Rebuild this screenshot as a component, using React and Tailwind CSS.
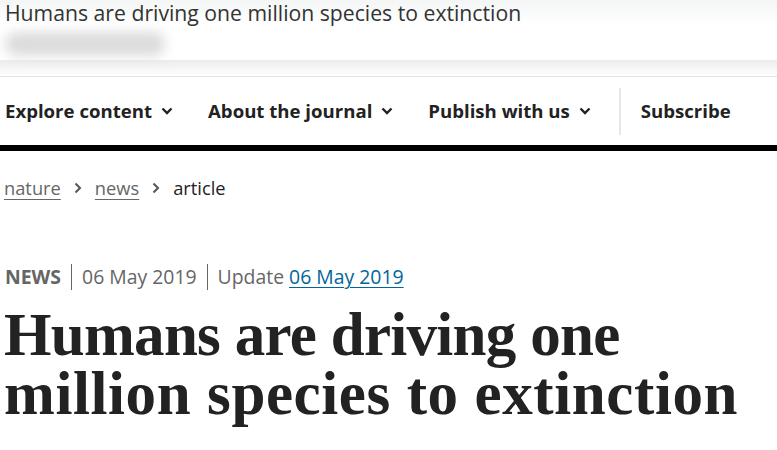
import React from 'react';

const Chevron = ({ className = '' }) => (
  <svg viewBox="0 0 12 8" width="12" height="8" className={className}>
    <path d="M1.5 1.5 L6 6 L10.5 1.5" fill="none" stroke="currentColor" strokeWidth="2.4" />
  </svg>
);

const Crumb = () => (
  <svg viewBox="0 0 8 12" width="8" height="12" className="text-[#555]">
    <path d="M1.5 1.5 L6 6 L1.5 10.5" fill="none" stroke="currentColor" strokeWidth="2" />
  </svg>
);

const navItems = ['Explore content', 'About the journal', 'Publish with us'];

export default function App() {
  return (
    <div className="w-[777px] h-[450px] overflow-hidden bg-white font-['Open_Sans',sans-serif] text-[#222]">
      {/* browser-ish header */}
      <div className="h-[60px] bg-gradient-to-b from-[#f4f6f6] to-white to-[40%] px-[5px]">
        <div className="text-[21.2px] leading-[26px] text-[#333] whitespace-nowrap">
          Humans are driving one million species to extinction
        </div>
        <div className="mt-[6px] w-[160px] h-[24px] rounded-full bg-[#dcdcdc] blur-[6px]" />
      </div>
      <div className="h-[17px] bg-gradient-to-b from-[#ececec] to-white border-b border-[#e4e4e4]" />

      {/* nav */}
      <nav className="h-[74px] flex items-center border-b-[6px] border-black">
        {navItems.map((item, i) => (
          <div
            key={item}
            className={`flex items-center gap-[9px] text-[18.6px] font-bold text-[#222] ${i === 0 ? 'pl-[5px]' : 'pl-[35px]'}`}
          >
            {item}
            <Chevron className="mt-[1px]" />
          </div>
        ))}
        <div className="ml-[28px] w-[2px] h-[47px] bg-[#e6e6e6]" />
        <div className="pl-[20px] text-[18.6px] font-bold text-[#222]">Subscribe</div>
      </nav>

      {/* breadcrumbs */}
      <div className="flex items-center gap-[13px] px-[4px] pt-[24px] text-[18.3px] leading-[26px]">
        <span className="text-[#666] underline decoration-1 underline-offset-[4px]">nature</span>
        <Crumb />
        <span className="text-[#666] underline decoration-1 underline-offset-[4px]">news</span>
        <Crumb />
        <span className="text-[#222]">article</span>
      </div>

      {/* meta */}
      <div className="flex items-center px-[5px] mt-[63px] text-[19.4px] leading-[26px] text-[#666]">
        <span className="font-bold">NEWS</span>
        <span className="mx-[10px] w-px h-[26px] bg-[#666]" />
        <span>06 May 2019</span>
        <span className="mx-[10px] w-px h-[26px] bg-[#666]" />
        <span>Update&nbsp;</span>
        <span className="text-[#069] underline decoration-1 underline-offset-[3px]">06 May 2019</span>
      </div>

      {/* headline */}
      <h1 className="px-[4px] mt-[15px] font-['Liberation_Serif',serif] font-bold text-[61px] leading-[59px] text-[#222] whitespace-nowrap">
        <span className="block tracking-[-0.7px]">Humans are driving one</span>
        <span className="block tracking-[0.6px]">million species to extinction</span>
      </h1>
    </div>
  );
}
